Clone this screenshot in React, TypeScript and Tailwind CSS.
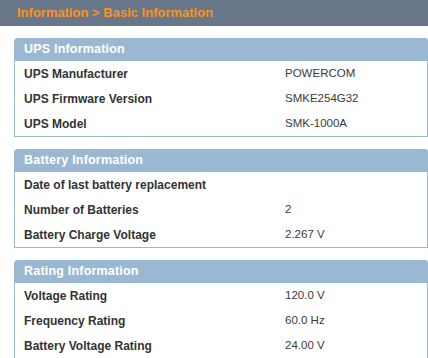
import React from 'react';

type Row = { label: string; value: string };

const sections: { title: string; rows: Row[] }[] = [
  {
    title: 'UPS Information',
    rows: [
      { label: 'UPS Manufacturer', value: 'POWERCOM' },
      { label: 'UPS Firmware Version', value: 'SMKE254G32' },
      { label: 'UPS Model', value: 'SMK-1000A' },
    ],
  },
  {
    title: 'Battery Information',
    rows: [
      { label: 'Date of last battery replacement', value: '' },
      { label: 'Number of Batteries', value: '2' },
      { label: 'Battery Charge Voltage', value: '2.267 V' },
    ],
  },
  {
    title: 'Rating Information',
    rows: [
      { label: 'Voltage Rating', value: '120.0 V' },
      { label: 'Frequency Rating', value: '60.0 Hz' },
      { label: 'Battery Voltage Rating', value: '24.00 V' },
    ],
  },
];

const Panel = ({ title, rows }: { title: string; rows: Row[] }) => (
  <div className="ml-[14px] w-[414px]">
    {/* header strip */}
    <div className="h-[23px] bg-[#9bb8d3] rounded-tl-[4px] rounded-tr-[3px] flex items-center pl-[10px]">
      <span className="text-white font-bold text-[12.5px] tracking-[0.2px]">{title}</span>
    </div>
    <div className="border-x border-b border-[#9bb8d3] bg-white">
      {rows.map((r) => (
        <div key={r.label} className="h-[25px] flex items-center text-[#333]">
          <div className="w-[270px] pl-[9px] font-bold text-[12px]">{r.label}</div>
          <div className="text-[11.5px] text-[#3a3a3a]">{r.value}</div>
        </div>
      ))}
    </div>
  </div>
);

export default function App() {
  return (
    <div className="w-[428px] h-[358px] bg-white overflow-hidden" style={{ fontFamily: '"Liberation Sans", Arial, sans-serif' }}>
      {/* ── breadcrumb bar ── */}
      <div className="h-[26px] bg-[#687789] flex items-center pl-[17px]">
        <span className="text-[#f7931e] font-bold text-[13px]">Information &gt; Basic Information</span>
      </div>

      <div className="pt-[12px] flex flex-col gap-[12px]">
        {sections.map((s) => (
          <Panel key={s.title} title={s.title} rows={s.rows} />
        ))}
      </div>
    </div>
  );
}
